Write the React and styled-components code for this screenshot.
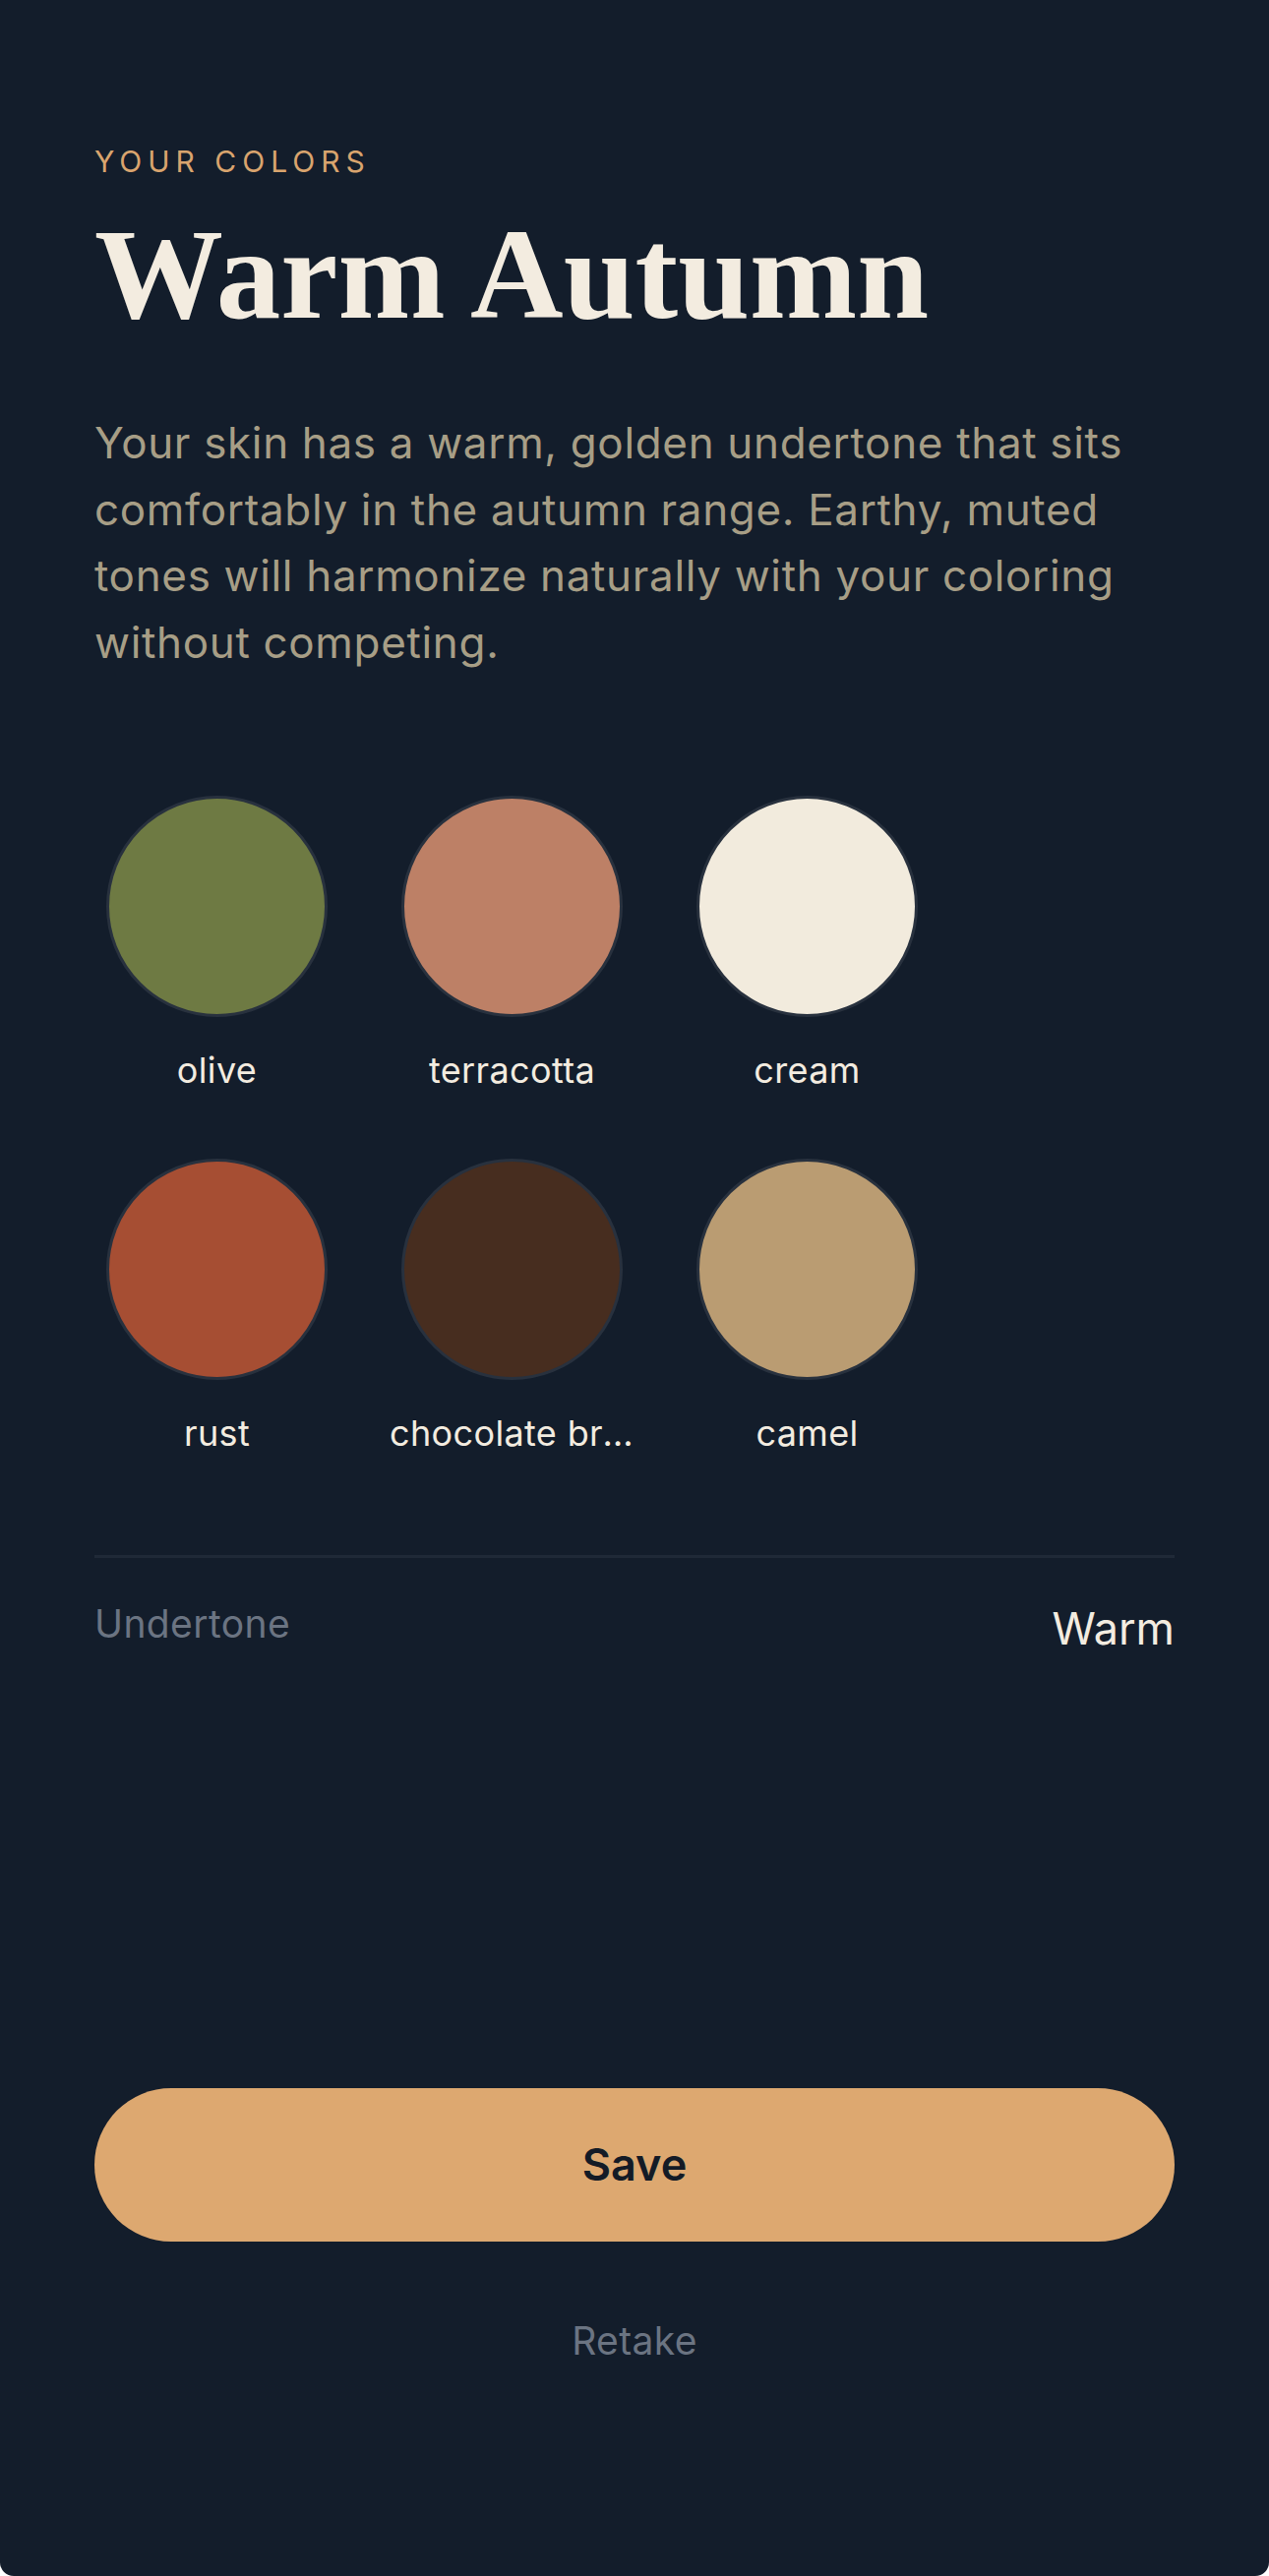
import React from "react";
import styled, { createGlobalStyle } from "styled-components";

const GlobalStyle = createGlobalStyle`
  html, body {
    margin: 0;
    padding: 0;
    background: #ffffff;
  }
  * {
    box-sizing: border-box;
  }
`;

const Screen = styled.div`
  min-height: 100vh;
  background: #131d2b;
  padding: 143px 96px 210px;
  display: flex;
  flex-direction: column;
  font-family: Inter, "Noto Sans", sans-serif;
  border-bottom-left-radius: 14px;
  border-bottom-right-radius: 14px;
`;

const Eyebrow = styled.div`
  font-size: 30px;
  line-height: 42px;
  letter-spacing: 0.2em;
  text-transform: uppercase;
  color: #d9a46e;
`;

const Title = styled.h1`
  margin: 22px 0 0;
  font-family: "Liberation Serif", "Times New Roman", serif;
  font-weight: 700;
  font-size: 131px;
  line-height: 1.1;
  color: #f3ece0;
`;

const Intro = styled.p`
  margin: 66px 0 0;
  font-size: 44px;
  line-height: 67.5px;
  letter-spacing: 0.015em;
  color: #a79e86;
`;

const Swatches = styled.div`
  margin-top: 122px;
  display: flex;
  flex-wrap: wrap;
  column-gap: 51px;
  row-gap: 65px;
`;

const Swatch = styled.div`
  width: 249px;
  display: flex;
  flex-direction: column;
  align-items: center;
  gap: 29px;
`;

const Dot = styled.div`
  width: 225px;
  height: 225px;
  border-radius: 50%;
  background: ${(p) => p.$color};
  border: 3px solid #28313e;
`;

const SwatchName = styled.div`
  max-width: 100%;
  font-size: 36px;
  line-height: 50px;
  letter-spacing: 0.01em;
  color: #f3ece0;
  white-space: nowrap;
  overflow: hidden;
  text-overflow: ellipsis;
`;

const Divider = styled.hr`
  margin: 99px 0 0;
  border: 0;
  height: 3px;
  background: #1f2937;
`;

const DetailRow = styled.div`
  padding-top: 38px;
  display: flex;
  justify-content: space-between;
  align-items: flex-start;
`;

const DetailLabel = styled.span`
  font-size: 39px;
  line-height: 1.5;
  letter-spacing: 0.01em;
  color: #6b7482;
`;

const DetailValue = styled.span`
  font-size: 45px;
  line-height: 1.5;
  color: #f3ece0;
`;

const Actions = styled.div`
  margin-top: auto;
  display: flex;
  flex-direction: column;
  align-items: center;
  gap: 72px;
`;

const SaveButton = styled.button`
  width: 100%;
  height: 156px;
  border: 0;
  border-radius: 78px;
  background: #dda870;
  color: #141b26;
  font-family: Inter, "Noto Sans", sans-serif;
  font-size: 45px;
  font-weight: 600;
  cursor: pointer;
`;

const RetakeButton = styled.button`
  border: 0;
  background: none;
  padding: 0;
  font-family: Inter, "Noto Sans", sans-serif;
  font-size: 39px;
  line-height: 1.5;
  letter-spacing: 0.01em;
  color: #6b7482;
  cursor: pointer;
`;

const palette = [
  { name: "olive", color: "#6e7a43" },
  { name: "terracotta", color: "#bd8066" },
  { name: "cream", color: "#f2ebdd" },
  { name: "rust", color: "#a64e33" },
  { name: "chocolate brown", color: "#472d1f" },
  { name: "camel", color: "#ba9c72" },
];

export default function App() {
  return (
    <>
      <GlobalStyle />
      <Screen>
        <Eyebrow>Your colors</Eyebrow>
        <Title>Warm Autumn</Title>
        <Intro>
          Your skin has a warm, golden undertone that sits comfortably in the
          autumn range. Earthy, muted tones will harmonize naturally with your
          coloring without competing.
        </Intro>

        <Swatches>
          {palette.map((c) => (
            <Swatch key={c.name}>
              <Dot $color={c.color} />
              <SwatchName>{c.name}</SwatchName>
            </Swatch>
          ))}
        </Swatches>

        <Divider />
        <DetailRow>
          <DetailLabel>Undertone</DetailLabel>
          <DetailValue>Warm</DetailValue>
        </DetailRow>

        <Actions>
          <SaveButton>Save</SaveButton>
          <RetakeButton>Retake</RetakeButton>
        </Actions>
      </Screen>
    </>
  );
}
